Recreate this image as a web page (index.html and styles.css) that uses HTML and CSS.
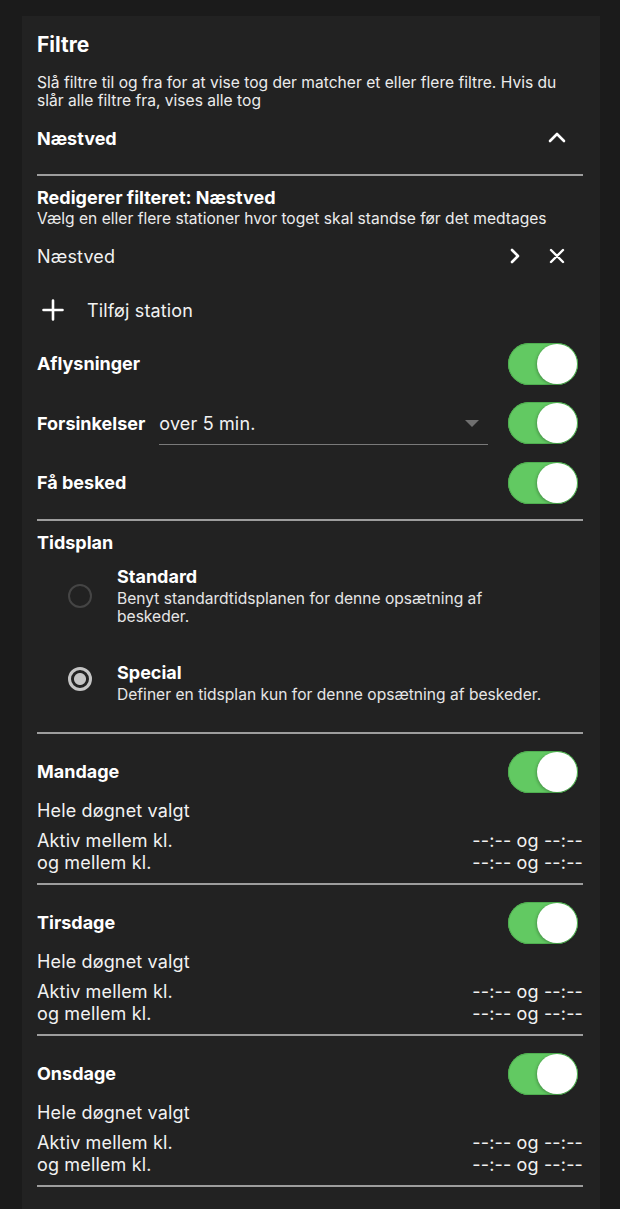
FILE: index.html
```html
<!DOCTYPE html>
<html lang="da">
<head>
<meta charset="utf-8">
<title>Filtre</title>
<link rel="stylesheet" href="styles.css">
</head>
<body>
<div class="card">
  <h1 class="title">Filtre</h1>
  <p class="desc">Slå filtre til og fra for at vise tog der matcher et eller flere filtre. Hvis du slår alle filtre fra, vises alle tog</p>

  <div class="group-head">
    <span class="bold">Næstved</span>
    <svg class="icon chevron-up" width="18" height="12" viewBox="0 0 18 12"><path d="M2 10 L9 3 L16 10" fill="none" stroke="#fff" stroke-width="2.6" stroke-linecap="round" stroke-linejoin="round"/></svg>
  </div>
  <div class="divider first"></div>

  <div class="edit-title bold">Redigerer filteret: Næstved</div>
  <div class="edit-sub">Vælg en eller flere stationer hvor toget skal standse før det medtages</div>

  <div class="station-row">
    <span class="reg">Næstved</span>
    <div class="station-actions">
      <svg class="icon" width="14" height="16" viewBox="0 0 14 16"><path d="M4 2 L10 8 L4 14" fill="none" stroke="#fff" stroke-width="2.6" stroke-linecap="round" stroke-linejoin="round"/></svg>
      <svg class="icon" width="16" height="16" viewBox="0 0 16 16"><path d="M2 2 L14 14 M14 2 L2 14" fill="none" stroke="#fff" stroke-width="2.4" stroke-linecap="round"/></svg>
    </div>
  </div>

  <div class="add-row">
    <svg class="icon plus" width="22" height="22" viewBox="0 0 22 22"><path d="M11 1.5 V20.5 M1.5 11 H20.5" fill="none" stroke="#fff" stroke-width="2.6" stroke-linecap="round"/></svg>
    <span class="reg">Tilføj station</span>
  </div>

  <div class="switch-row">
    <span class="bold">Aflysninger</span>
    <span class="toggle"></span>
  </div>
  <div class="switch-row">
    <span class="bold">Forsinkelser</span>
    <div class="select">
      <span class="reg">over 5 min.</span>
      <span class="caret"></span>
    </div>
    <span class="toggle"></span>
  </div>
  <div class="switch-row">
    <span class="bold">Få besked</span>
    <span class="toggle"></span>
  </div>
  <div class="divider after-switches"></div>

  <div class="section-title bold">Tidsplan</div>
  <div class="radio-option standard">
    <span class="radio"></span>
    <div class="radio-text">
      <div class="radio-title">Standard</div>
      <div class="radio-desc">Benyt standardtidsplanen for denne opsætning af beskeder.</div>
    </div>
  </div>
  <div class="radio-option special">
    <span class="radio checked"></span>
    <div class="radio-text">
      <div class="radio-title">Special</div>
      <div class="radio-desc">Definer en tidsplan kun for denne opsætning af beskeder.</div>
    </div>
  </div>
  <div class="divider after-radio"></div>

  <div class="day">
    <div class="day-head">
      <span class="bold">Mandage</span>
      <span class="toggle"></span>
    </div>
    <div class="day-all">Hele døgnet valgt</div>
    <div class="day-times">
      <div class="time-row"><span>Aktiv mellem kl.</span><span>--:-- og --:--</span></div>
      <div class="time-row"><span>og mellem kl.</span><span>--:-- og --:--</span></div>
    </div>
  </div>
  <div class="divider day-div"></div>

  <div class="day">
    <div class="day-head">
      <span class="bold">Tirsdage</span>
      <span class="toggle"></span>
    </div>
    <div class="day-all">Hele døgnet valgt</div>
    <div class="day-times">
      <div class="time-row"><span>Aktiv mellem kl.</span><span>--:-- og --:--</span></div>
      <div class="time-row"><span>og mellem kl.</span><span>--:-- og --:--</span></div>
    </div>
  </div>
  <div class="divider day-div"></div>

  <div class="day">
    <div class="day-head">
      <span class="bold">Onsdage</span>
      <span class="toggle"></span>
    </div>
    <div class="day-all">Hele døgnet valgt</div>
    <div class="day-times">
      <div class="time-row"><span>Aktiv mellem kl.</span><span>--:-- og --:--</span></div>
      <div class="time-row"><span>og mellem kl.</span><span>--:-- og --:--</span></div>
    </div>
  </div>
  <div class="divider day-div"></div>
</div>
</body>
</html>
```
FILE: styles.css
```css
html, body {
  margin: 0;
  padding: 0;
  background: #1b1b1b;
  height: 100%;
  overflow: hidden;
}
body {
  font-family: Inter, "Noto Sans", sans-serif;
  color: #f2f2f2;
  -webkit-font-smoothing: antialiased;
}
.card {
  margin: 16px 20px 0 22px;
  background: #222222;
  padding: 16px 17px 40px 15px;
  min-height: 1200px;
  box-sizing: border-box;
}
.title {
  margin: 0;
  font-size: 21px;
  line-height: 26px;
  font-weight: 700;
  color: #fff;
}
.desc {
  margin: 16px 0 0;
  font-size: 15.6px;
  line-height: 18px;
  color: #ececec;
}
.bold {
  font-weight: 700;
  font-size: 18px;
  color: #fff;
}
.reg {
  font-size: 18px;
  letter-spacing: 0.15px;
  color: #f2f2f2;
}
.group-head {
  margin-top: 6px;
  height: 44px;
  display: flex;
  align-items: center;
  justify-content: space-between;
}
.chevron-up {
  margin-right: 17px;
  margin-bottom: 2px;
}
.divider {
  height: 2px;
  background: #9d9d9d;
}
.divider.first { margin-top: 14px; }
.edit-title {
  margin-top: 11px;
  line-height: 22px;
}
.edit-sub {
  margin-top: 1px;
  font-size: 15.6px;
  line-height: 18px;
  color: #ececec;
}
.station-row {
  margin-top: 6px;
  height: 44px;
  display: flex;
  align-items: center;
  justify-content: space-between;
}
.station-actions {
  display: flex;
  align-items: center;
  gap: 27px;
  margin-right: 18px;
}
.icon { display: block; }
.add-row {
  margin-top: 10px;
  height: 44px;
  display: flex;
  align-items: center;
  gap: 23px;
  padding-left: 5px;
}
.switch-row {
  height: 59.5px;
  display: flex;
  align-items: center;
  gap: 14px;
}
.add-row + .switch-row { margin-top: 2px; }
.switch-row .bold { flex: 0 0 auto; }
.switch-row .toggle { margin-left: auto; }
.select {
  flex: 1 1 auto;
  height: 40px;
  margin-top: 2px;
  border-bottom: 1px solid #7a7a7a;
  display: flex;
  align-items: center;
  justify-content: space-between;
  padding-right: 9px;
  margin-right: 6px;
}
.caret {
  width: 0;
  height: 0;
  border-left: 7px solid transparent;
  border-right: 7px solid transparent;
  border-top: 7px solid #707070;
}
.toggle {
  position: relative;
  flex: 0 0 auto;
  width: 70px;
  height: 42px;
  border-radius: 21px;
  background: #62c962;
  box-shadow: inset 0 0 0 1px #4fae50;
  margin-right: 5px;
}
.toggle::after {
  content: "";
  position: absolute;
  right: 1px;
  top: 1px;
  width: 40px;
  height: 40px;
  border-radius: 50%;
  background: #fff;
  box-shadow: -1px 1px 3px rgba(0,0,0,0.25);
}
.divider.after-switches { margin-top: 6px; }
.section-title {
  margin-top: 11px;
  line-height: 22px;
}
.radio-option {
  display: flex;
  align-items: center;
}
.radio-option.standard { margin-top: 12px; }
.radio-option.special { margin-top: 36px; }
.radio {
  flex: 0 0 auto;
  width: 24px;
  height: 24px;
  box-sizing: border-box;
  border-radius: 50%;
  border: 2px solid #454545;
  margin: 0 25px 0 31px;
}
.radio.checked {
  border: 3px solid #c4c4c4;
  background: radial-gradient(circle, #c4c4c4 0 5.5px, #222 6.5px);
  margin-bottom: 8px;
}
.radio-text { flex: 1 1 auto; }
.radio-title {
  font-weight: 700;
  font-size: 18px;
  line-height: 22px;
  color: #fff;
}
.radio-desc {
  margin-top: 2px;
  font-size: 15.6px;
  line-height: 18px;
  color: #e6e6e6;
  padding-right: 34px;
}
.divider.after-radio { margin-top: 28px; }
.day { padding-top: 16px; }
.day-head {
  height: 44px;
  display: flex;
  align-items: center;
  justify-content: space-between;
}
.day-all {
  margin-top: 6px;
  font-size: 18px;
  line-height: 22px;
  letter-spacing: 0.15px;
}
.day-times { margin-top: 8px; }
.time-row {
  display: flex;
  justify-content: space-between;
  font-size: 18px;
  line-height: 22px;
  letter-spacing: 0.15px;
}
.divider.day-div { margin-top: 9px; }
```
